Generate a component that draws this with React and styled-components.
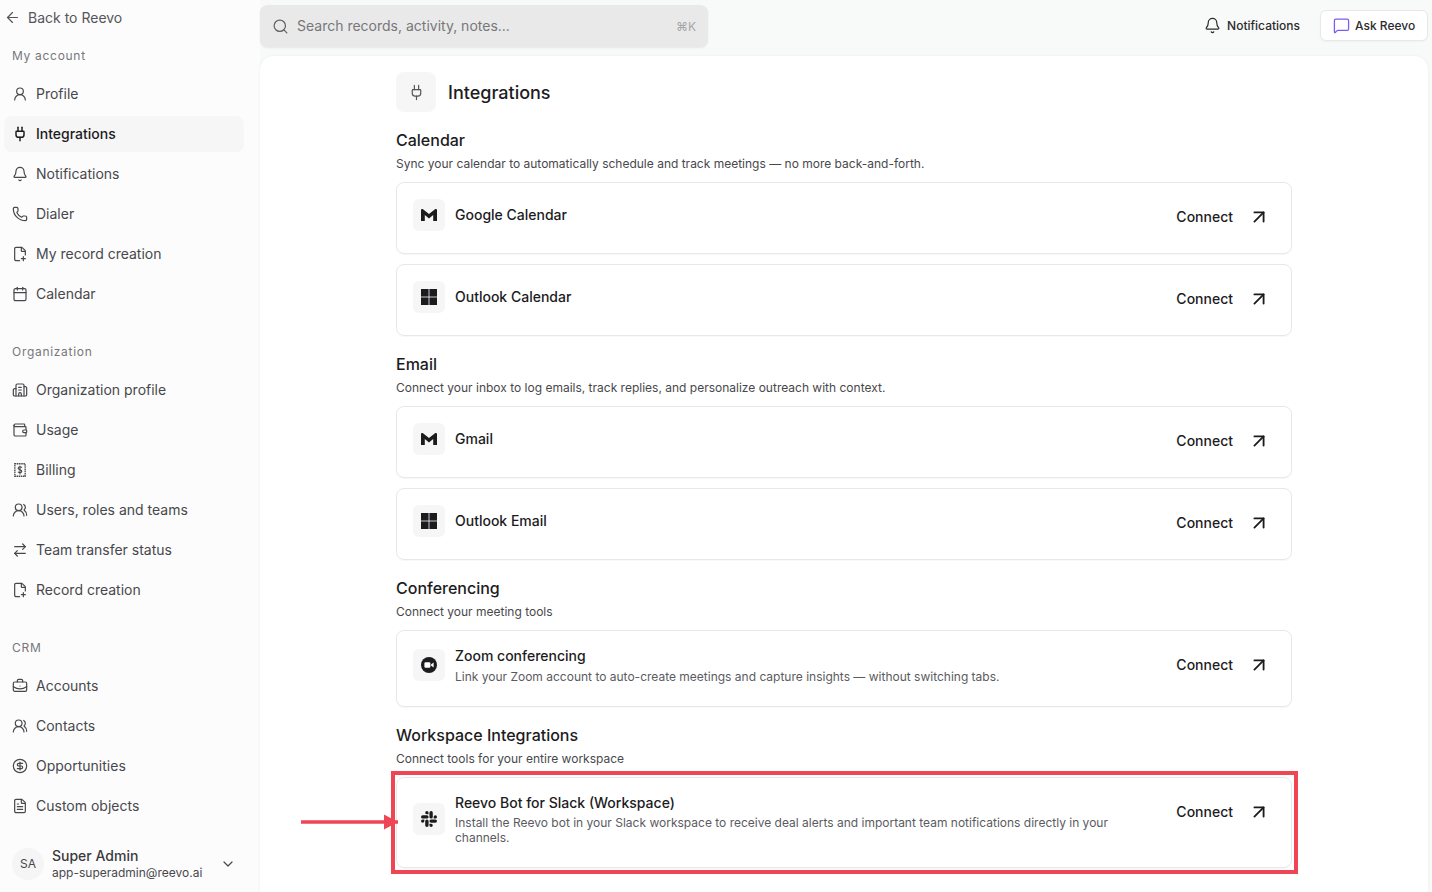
import React from "react";
import styled, { createGlobalStyle } from "styled-components";
import {
  ArrowLeft,
  ArrowRightLeft,
  ArrowUpRight,
  Bell,
  BriefcaseBusiness,
  Building2,
  Calendar,
  ChevronDown,
  CircleDollarSign,
  FilePlus2,
  FileText,
  MessageSquare,
  Phone,
  Plug,
  Search,
  UserRound,
  UsersRound,
  Wallet,
} from "lucide-react";
import { SiSlack } from "react-icons/si";

const GlobalStyle = createGlobalStyle`
  html, body {
    margin: 0;
    padding: 0;
    height: 100%;
    overflow: hidden;
    font-family: Inter, "Liberation Sans", sans-serif;
    color: #1c1c1e;
  }
  * { box-sizing: border-box; }
`;

const BillingIcon = ({ size, strokeWidth, ...props }) => (
  <svg width={size} height={size} viewBox="0 0 18 18" fill="none" stroke="currentColor" {...props}>
    <rect x="3.2" y="2" width="11.6" height="14" strokeWidth="1.5" strokeDasharray="1.7 0.7" />
    <path
      d="M11 6.3c-.4-.7-1.1-1-2-1-1.1 0-2 .6-2 1.7 0 2.3 4 1.1 4 3.3 0 1-.9 1.7-2 1.7-.9 0-1.7-.4-2.1-1.1M9 4.2v9.8"
      strokeWidth="1.3"
    />
  </svg>
);

const GmailIcon = () => (
  <svg width="16" height="12" viewBox="0 0 16 12" fill="#1c1c1e">
    <path d="M0 1.2C0 .2 1.2-.4 2 .3L8 5 14 .3c.8-.7 2-.1 2 .9V12h-3.8V6L8 9.4 3.8 6v6H0z" />
  </svg>
);

const WindowsIcon = () => (
  <svg width="16" height="16" viewBox="0 0 16 16" fill="#1c1c1e">
    <rect width="7.6" height="7.6" />
    <rect x="8.4" width="7.6" height="7.6" />
    <rect y="8.4" width="7.6" height="7.6" />
    <rect x="8.4" y="8.4" width="7.6" height="7.6" />
  </svg>
);

const ZoomIcon = () => (
  <svg width="16" height="16" viewBox="0 0 16 16">
    <circle cx="8" cy="8" r="8" fill="#1c1c1e" />
    <rect x="3.4" y="5.2" width="6" height="5.6" rx="1.2" fill="#fff" />
    <path d="M10 7.4l2.6-1.9v5l-2.6-1.9z" fill="#fff" />
  </svg>
);

const navGroups = [
  {
    label: "My account",
    items: [
      { icon: UserRound, text: "Profile" },
      { icon: Plug, text: "Integrations", active: true },
      { icon: Bell, text: "Notifications" },
      { icon: Phone, text: "Dialer" },
      { icon: FilePlus2, text: "My record creation" },
      { icon: Calendar, text: "Calendar" },
    ],
  },
  {
    label: "Organization",
    items: [
      { icon: Building2, text: "Organization profile" },
      { icon: Wallet, text: "Usage" },
      { icon: BillingIcon, text: "Billing" },
      { icon: UsersRound, text: "Users, roles and teams" },
      { icon: ArrowRightLeft, text: "Team transfer status" },
      { icon: FilePlus2, text: "Record creation" },
    ],
  },
  {
    label: "CRM",
    items: [
      { icon: BriefcaseBusiness, text: "Accounts" },
      { icon: UsersRound, text: "Contacts" },
      { icon: CircleDollarSign, text: "Opportunities" },
      { icon: FileText, text: "Custom objects" },
    ],
  },
];

const sections = [
  {
    title: "Calendar",
    subtitle: "Sync your calendar to automatically schedule and track meetings — no more back-and-forth.",
    cards: [
      { logo: <GmailIcon />, name: "Google Calendar" },
      { logo: <WindowsIcon />, name: "Outlook Calendar" },
    ],
  },
  {
    title: "Email",
    subtitle: "Connect your inbox to log emails, track replies, and personalize outreach with context.",
    cards: [
      { logo: <GmailIcon />, name: "Gmail" },
      { logo: <WindowsIcon />, name: "Outlook Email" },
    ],
  },
  {
    title: "Conferencing",
    subtitle: "Connect your meeting tools",
    cards: [
      {
        logo: <ZoomIcon />,
        name: "Zoom conferencing",
        description: "Link your Zoom account to auto-create meetings and capture insights — without switching tabs.",
      },
    ],
  },
  {
    title: "Workspace Integrations",
    subtitle: "Connect tools for your entire workspace",
    cards: [
      {
        logo: <SiSlack size={16} color="#1c1c1e" />,
        name: "Reevo Bot for Slack (Workspace)",
        description:
          "Install the Reevo bot in your Slack workspace to receive deal alerts and important team notifications directly in your channels.",
        highlighted: true,
      },
    ],
  },
];

export default function App() {
  return (
    <Page>
      <GlobalStyle />
      <Sidebar>
        <BackLink>
          <ArrowLeft size={17} strokeWidth={1.7} />
          Back to Reevo
        </BackLink>
        {navGroups.map((group) => (
          <NavGroup key={group.label}>
            <GroupLabel>{group.label}</GroupLabel>
            {group.items.map((item) => (
              <NavItem key={item.text} $active={item.active}>
                <item.icon size={16} strokeWidth={item.active ? 2.2 : 1.8} />
                {item.text}
              </NavItem>
            ))}
          </NavGroup>
        ))}
        <UserRow>
          <Avatar>SA</Avatar>
          <UserInfo>
            <UserName>Super Admin</UserName>
            <UserEmail>app-superadmin@reevo.ai</UserEmail>
          </UserInfo>
          <ChevronDown size={16} strokeWidth={1.8} />
        </UserRow>
      </Sidebar>

      <Main>
        <Topbar>
          <SearchBox>
            <Search size={17} strokeWidth={1.7} />
            <SearchText>Search records, activity, notes...</SearchText>
            <Shortcut>⌘K</Shortcut>
          </SearchBox>
          <TopActions>
            <NotifyButton>
              <Bell size={17} strokeWidth={1.7} />
              Notifications
            </NotifyButton>
            <AskButton>
              <MessageSquare size={17} strokeWidth={1.8} color="#7c5cf0" />
              Ask Reevo
            </AskButton>
          </TopActions>
        </Topbar>

        <Panel>
          <Content>
            <PageHeader>
              <HeaderIcon>
                <Plug size={17} strokeWidth={1.7} />
              </HeaderIcon>
              <PageTitle>Integrations</PageTitle>
            </PageHeader>

            {sections.map((section) => (
              <Section key={section.title}>
                <SectionTitle>{section.title}</SectionTitle>
                <SectionSubtitle>{section.subtitle}</SectionSubtitle>
                <CardList>
                  {section.cards.map((card) => (
                    <Card key={card.name}>
                      <CardInfo>
                        <LogoBox>{card.logo}</LogoBox>
                        <CardText>
                          <CardName>{card.name}</CardName>
                          {card.description && <CardDescription>{card.description}</CardDescription>}
                        </CardText>
                      </CardInfo>
                      <ConnectButton>
                        Connect
                        <ArrowUpRight size={22} strokeWidth={2} />
                      </ConnectButton>
                      {card.highlighted && (
                        <>
                          <HighlightFrame />
                          <PointerArrow width="98" height="16" viewBox="0 0 98 16">
                            <rect x="0" y="6.25" width="97" height="3.5" fill="#ef4655" />
                            <path d="M83 0.5L97 8L83 15.5z" fill="#ef4655" />
                          </PointerArrow>
                        </>
                      )}
                    </Card>
                  ))}
                </CardList>
              </Section>
            ))}
          </Content>
        </Panel>
      </Main>
    </Page>
  );
}

const Page = styled.div`
  display: flex;
  height: 100vh;
  overflow: hidden;
  background-color: #f8f9f9;
`;

const Sidebar = styled.aside`
  flex: 0 0 260px;
  display: flex;
  flex-direction: column;
  padding: 0 16px 0 4px;
  background-color: #fcfcfc;
`;

const BackLink = styled.div`
  display: flex;
  align-items: center;
  gap: 7px;
  height: 36px;
  margin-bottom: 12px;
  padding-bottom: 2px;
  font-size: 14px;
  color: #56565a;
`;

const NavGroup = styled.nav`
  display: flex;
  flex-direction: column;
  gap: 4px;
  margin-bottom: 32px;
`;

const GroupLabel = styled.div`
  height: 16px;
  margin-bottom: 8px;
  padding-left: 8px;
  font-size: 12px;
  line-height: 16px;
  letter-spacing: 0.7px;
  color: #77777b;
`;

const NavItem = styled.div`
  display: flex;
  align-items: center;
  gap: 8px;
  height: 36px;
  padding: 0 0 2px 8px;
  border-radius: 8px;
  font-size: 14px;
  font-weight: ${(p) => (p.$active ? 500 : 400)};
  color: ${(p) => (p.$active ? "#1c1c1e" : "#48484c")};
  background-color: ${(p) => (p.$active ? "#f6f6f6" : "transparent")};

  svg {
    margin-top: 2px;
  }
`;

const UserRow = styled.div`
  display: flex;
  align-items: center;
  gap: 8px;
  margin-top: -9px;
  padding: 0 8px;
  color: #48484c;
`;

const Avatar = styled.div`
  flex: 0 0 32px;
  display: flex;
  align-items: center;
  justify-content: center;
  height: 32px;
  padding-bottom: 1px;
  border-radius: 50%;
  font-size: 12px;
  background-color: #f5f5f5;
`;

const UserInfo = styled.div`
  flex: 1;
  min-width: 0;
`;

const UserName = styled.div`
  font-size: 14px;
  font-weight: 500;
  line-height: 18px;
  color: #3a3a3d;
`;

const UserEmail = styled.div`
  font-size: 12px;
  line-height: 16px;
  color: #48484c;
`;

const Main = styled.div`
  flex: 1;
  min-width: 0;
  display: flex;
  flex-direction: column;
  padding-right: 4px;
`;

const Topbar = styled.header`
  flex: 0 0 56px;
  display: flex;
  align-items: flex-start;
  justify-content: space-between;
  padding-top: 5px;
`;

const SearchBox = styled.div`
  display: flex;
  align-items: center;
  gap: 8px;
  width: 448px;
  height: 42px;
  padding: 0 12px 2px 12px;
  border-radius: 8px;
  background-color: #e9e9e9;
  box-shadow: 0 1px 2px rgba(0, 0, 0, 0.08);
  color: #5f5f63;

  svg {
    margin-top: 2px;
  }
`;

const SearchText = styled.span`
  flex: 1;
  font-size: 14px;
  color: #77777b;
`;

const Shortcut = styled.span`
  margin-top: 2px;
  font-size: 12px;
  color: #a5a5a8;
`;

const TopActions = styled.div`
  display: flex;
  align-items: center;
  gap: 20px;
  padding-top: 5px;
`;

const NotifyButton = styled.div`
  display: flex;
  align-items: center;
  gap: 6px;
  font-size: 12px;
  font-weight: 500;
  color: #2b2b2e;
`;

const AskButton = styled.div`
  display: flex;
  align-items: center;
  gap: 5px;
  width: 108px;
  height: 31px;
  padding-left: 12px;
  border: 1px solid #e8e8e8;
  border-radius: 6px;
  font-size: 12px;
  font-weight: 500;
  color: #2b2b2e;
  background-color: #ffffff;
  box-shadow: 0 1px 2px rgba(0, 0, 0, 0.04);
`;

const Panel = styled.main`
  flex: 1;
  min-height: 0;
  padding-top: 16px;
  border-radius: 14px 14px 0 0;
  background-color: #ffffff;
  box-shadow: 0 0 3px rgba(0, 0, 0, 0.06);
`;

const Content = styled.div`
  width: 896px;
  margin: 0 auto;
`;

const PageHeader = styled.div`
  display: flex;
  align-items: center;
  gap: 12px;
`;

const HeaderIcon = styled.div`
  display: flex;
  align-items: center;
  justify-content: center;
  width: 40px;
  height: 40px;
  border-radius: 8px;
  color: #56565a;
  background-color: #f6f6f6;
`;

const PageTitle = styled.h1`
  margin: 0;
  font-size: 18px;
  font-weight: 500;
  color: #1c1c1e;
`;

const Section = styled.section`
  margin-top: 16px;
`;

const SectionTitle = styled.h2`
  margin: 0;
  font-size: 16px;
  font-weight: 500;
  line-height: 24px;
  color: #1c1c1e;
`;

const SectionSubtitle = styled.p`
  margin: 4px 0 10px;
  font-size: 12px;
  line-height: 16px;
  color: #48484c;
`;

const CardList = styled.div`
  display: flex;
  flex-direction: column;
  gap: 10px;
`;

const Card = styled.div`
  position: relative;
  display: flex;
  align-items: flex-start;
  justify-content: space-between;
  padding: 16px 16px 22px;
  border: 1px solid #e8e8e8;
  border-radius: 8px;
  box-shadow: 0 1px 1px rgba(0, 0, 0, 0.03);
`;

const CardInfo = styled.div`
  display: flex;
  align-items: center;
  gap: 10px;
  min-height: 32px;
`;

const LogoBox = styled.div`
  flex: 0 0 32px;
  display: flex;
  align-items: center;
  justify-content: center;
  height: 32px;
  border-radius: 6px;
  background-color: #f6f6f6;
`;

const CardText = styled.div`
  display: flex;
  flex-direction: column;
  gap: 3.5px;
  max-width: 670px;
`;

const CardName = styled.div`
  font-size: 14px;
  font-weight: 500;
  line-height: 18px;
  color: #1c1c1e;
`;

const CardDescription = styled.div`
  font-size: 12px;
  line-height: 15px;
  color: #5b5b5f;
`;

const ConnectButton = styled.div`
  display: flex;
  align-items: center;
  gap: 15px;
  height: 35px;
  margin-bottom: -3px;
  padding-right: 5px;
  font-size: 14px;
  font-weight: 500;
  color: #1c1c1e;

  svg {
    margin-top: 1px;
  }
`;

const HighlightFrame = styled.div`
  position: absolute;
  inset: -6.5px -7px -7px -6px;
  border: 4px solid #ef4655;
  pointer-events: none;
`;

const PointerArrow = styled.svg`
  position: absolute;
  left: -96px;
  top: 36.5px;
`;
